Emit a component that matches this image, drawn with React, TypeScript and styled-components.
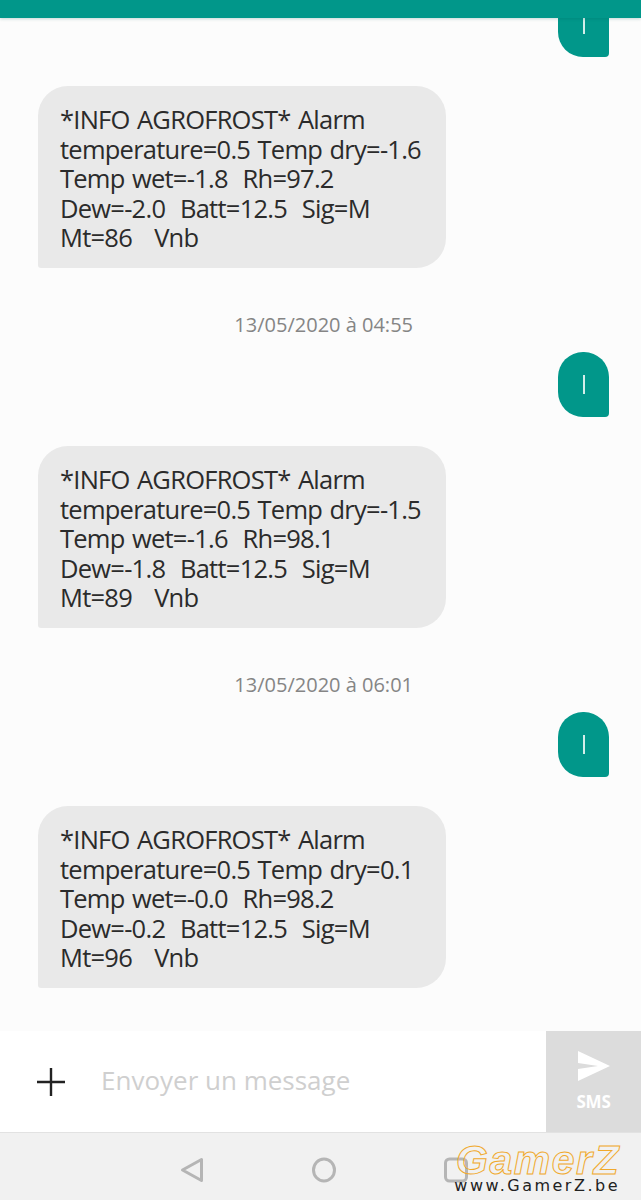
import { Fragment } from "react";
import styled, { createGlobalStyle } from "styled-components";

const GlobalStyle = createGlobalStyle`
  html, body {
    margin: 0;
    padding: 0;
    height: 100%;
    overflow: hidden;
    background: #fcfcfc;
    font-family: "Open Sans", "Noto Sans", sans-serif;
  }
  #root {
    height: 100%;
  }
`;

const Screen = styled.div`
  position: relative;
  display: flex;
  flex-direction: column;
  width: 641px;
  height: 1200px;
  overflow: hidden;
`;

const TopBar = styled.div`
  position: relative;
  z-index: 2;
  flex: none;
  height: 18px;
  background: #01978a;
  box-shadow: 0 1px 3px rgba(0, 90, 80, 0.22);
`;

// anchored to the bottom like a real chat, older messages scroll off the top
const Thread = styled.div`
  flex: 1;
  min-height: 0;
  overflow: hidden;
  display: flex;
  flex-direction: column;
  justify-content: flex-end;
  padding: 0 32px 43px 38px;
  background: #fcfcfc;
`;

const Outgoing = styled.div`
  flex: none;
  align-self: flex-end;
  display: flex;
  align-items: center;
  justify-content: center;
  width: 51px;
  height: 65px;
  margin-bottom: 29px;
  background: #01978a;
  border-radius: 25px 25px 4px 25px;
`;

const Caret = styled.span`
  display: block;
  width: 2px;
  height: 19px;
  background: #d3eeea;
`;

const Incoming = styled.div`
  flex: none;
  box-sizing: border-box;
  width: 408px;
  height: 182px;
  padding: 19px 10px 0 22px;
  background: #e9e9e9;
  border-radius: 30px 30px 30px 3px;
`;

const Line = styled.div`
  height: 29.5px;
  font-size: 25.5px;
  line-height: 29.5px;
  letter-spacing: -0.75px;
  word-spacing: 1.5px;
  white-space: pre;
  color: #2b2b2b;
`;

const Stamp = styled.div`
  flex: none;
  align-self: flex-end;
  height: 24px;
  margin: 45px 196px 15px 0;
  font-size: 20px;
  line-height: 24px;
  color: #858585;
`;

const Composer = styled.div`
  flex: none;
  display: flex;
  height: 101px;
  background: #fff;
`;

const AddButton = styled.div`
  flex: none;
  display: flex;
  align-items: center;
  justify-content: center;
  width: 101px;
  color: #222;
`;

const Placeholder = styled.div`
  flex: 1;
  align-self: center;
  margin-bottom: 4px;
  font-size: 26px;
  color: #cfcfcf;
`;

const SendButton = styled.div`
  flex: none;
  display: flex;
  flex-direction: column;
  align-items: center;
  width: 95px;
  padding-top: 20px;
  box-sizing: border-box;
  background: #dcdcdc;
  color: #fff;
`;

const SendLabel = styled.span`
  margin-top: 11px;
  font-size: 17px;
  line-height: 20px;
  font-weight: 700;
  letter-spacing: -0.2px;
`;

const NavBar = styled.div`
  flex: none;
  box-sizing: border-box;
  height: 68px;
  display: flex;
  align-items: center;
  justify-content: center;
  gap: 108px;
  padding: 7px 0 0 6px;
  background: #f1f1f1;
  border-top: 1px solid #e2e2e2;
  color: #b5b5b5;
`;

const Watermark = styled.div`
  position: absolute;
  right: 21px;
  bottom: 6px;
  display: flex;
  flex-direction: column;
  align-items: flex-end;
`;

const WatermarkLogo = styled.span`
  font-family: "Liberation Sans", sans-serif;
  font-size: 41px;
  line-height: 40px;
  font-weight: 700;
  font-style: italic;
  letter-spacing: 1.5px;
  color: transparent;
  -webkit-text-stroke: 1px #f0a92c;
`;

const WatermarkUrl = styled.span`
  margin-top: -3px;
  font-family: "DejaVu Sans", sans-serif;
  font-size: 16px;
  line-height: 17px;
  letter-spacing: 2.5px;
  color: #222;
`;

const messages = [
  {
    stamp: null,
    lines: [
      "*INFO AGROFROST* Alarm",
      "temperature=0.5 Temp dry=-1.6",
      "Temp wet=-1.8  Rh=97.2",
      "Dew=-2.0  Batt=12.5  Sig=M",
      "Mt=86   Vnb",
    ],
  },
  {
    stamp: "13/05/2020 à 04:55",
    lines: [
      "*INFO AGROFROST* Alarm",
      "temperature=0.5 Temp dry=-1.5",
      "Temp wet=-1.6  Rh=98.1",
      "Dew=-1.8  Batt=12.5  Sig=M",
      "Mt=89   Vnb",
    ],
  },
  {
    stamp: "13/05/2020 à 06:01",
    lines: [
      "*INFO AGROFROST* Alarm",
      "temperature=0.5 Temp dry=0.1",
      "Temp wet=-0.0  Rh=98.2",
      "Dew=-0.2  Batt=12.5  Sig=M",
      "Mt=96   Vnb",
    ],
  },
];

const App = () => {
  return (
    <Screen>
      <GlobalStyle />
      <TopBar />
      <Thread>
        {messages.map((msg, i) => (
          <Fragment key={i}>
            {msg.stamp && <Stamp>{msg.stamp}</Stamp>}
            <Outgoing>
              <Caret />
            </Outgoing>
            <Incoming>
              {msg.lines.map((line) => (
                <Line key={line}>{line}</Line>
              ))}
            </Incoming>
          </Fragment>
        ))}
      </Thread>
      <Composer>
        <AddButton>
          <svg width="30" height="30" viewBox="0 0 30 30" fill="none" stroke="currentColor" strokeWidth="2.4">
            <path d="M15 1v28M1 15h28" />
          </svg>
        </AddButton>
        <Placeholder>Envoyer un message</Placeholder>
        <SendButton>
          <svg width="34" height="30" viewBox="0 0 34 30" fill="currentColor">
            <path d="M1 0l32 15L1 30V18l20-3L1 12z" />
          </svg>
          <SendLabel>SMS</SendLabel>
        </SendButton>
      </Composer>
      <NavBar>
        <svg width="24" height="26" viewBox="0 0 24 26" fill="none" stroke="currentColor" strokeWidth="3" strokeLinejoin="round">
          <path d="M21.5 2.5v21L2.5 13z" />
        </svg>
        <svg width="24" height="26" viewBox="0 0 24 26" fill="none" stroke="currentColor" strokeWidth="3">
          <ellipse cx="12" cy="13" rx="10.5" ry="11" />
        </svg>
        <svg width="24" height="26" viewBox="0 0 24 26" fill="none" stroke="currentColor" strokeWidth="3">
          <rect x="1.5" y="2" width="21" height="22" rx="4" />
        </svg>
      </NavBar>
      <Watermark>
        <WatermarkLogo>GamerZ</WatermarkLogo>
        <WatermarkUrl>www.GamerZ.be</WatermarkUrl>
      </Watermark>
    </Screen>
  );
};

export default App;
